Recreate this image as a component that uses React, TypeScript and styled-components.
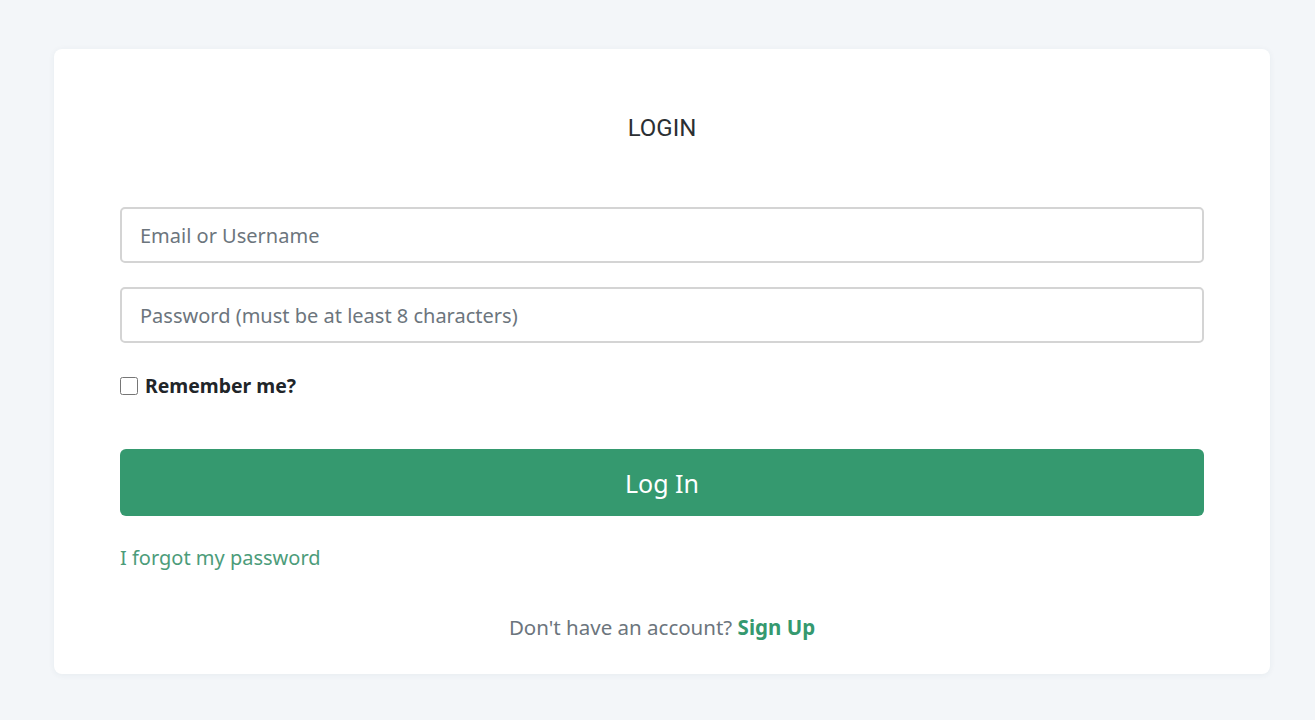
import React from "react";
import styled, { createGlobalStyle } from "styled-components";

const Global = createGlobalStyle`
  html, body { margin: 0; padding: 0; background: #f3f6f9; }
  body { font-family: "Noto Sans", "Open Sans", sans-serif; }
  * { box-sizing: border-box; }
`;

const Page = styled.div`
  min-height: 720px;
  padding: 49px 45px 47px 54px;
`;

const Card = styled.div`
  background: #ffffff;
  border-radius: 8px;
  box-shadow: 0 1px 6px rgba(40, 60, 90, 0.06);
  padding: 64px 66px 33px 66px;
  display: flex;
  flex-direction: column;
`;

const Title = styled.h1`
  margin: 0;
  text-align: center;
  font-family: Roboto, sans-serif;
  font-weight: 400;
  font-size: 24px;
  line-height: 30px;
  color: #2b2f33;
`;

const Form = styled.form`
  display: flex;
  flex-direction: column;
  margin-top: 64px;
`;

const Input = styled.input`
  height: 56px;
  width: 100%;
  border: 2px solid #d4d4d4;
  border-radius: 5px;
  padding: 0 18px;
  font-family: "Noto Sans", sans-serif;
  font-size: 20px;
  color: #495057;
  margin-bottom: 24px;
  outline: none;
  &::placeholder { color: #6c757d; }
`;

const CheckRow = styled.label`
  display: flex;
  align-items: center;
  gap: 7px;
  margin-top: 5px;
  font-weight: 700;
  font-size: 19.4px;
  color: #212529;
`;

const Check = styled.input`
  margin: 0;
  width: 18px;
  height: 18px;
`;

const Button = styled.button`
  margin-top: 50px;
  height: 67px;
  border: none;
  border-radius: 6px;
  background: #35996f;
  color: #ffffff;
  font-family: "Noto Sans", sans-serif;
  font-size: 25px;
  cursor: pointer;
`;

const Forgot = styled.a`
  margin-top: 28px;
  font-size: 20px;
  color: #4c9c7a;
  text-decoration: none;
  align-self: flex-start;
`;

const Footer = styled.p`
  margin: 42px 0 0 0;
  text-align: center;
  font-size: 20.5px;
  color: #6c757d;
`;

const SignUp = styled.a`
  color: #35996f;
  font-weight: 700;
  text-decoration: none;
`;

export default function App() {
  return (
    <>
      <Global />
      <Page>
        <Card>
          <Title>LOGIN</Title>
          <Form onSubmit={(e) => e.preventDefault()}>
            <Input type="text" placeholder="Email or Username" />
            <Input type="password" placeholder="Password (must be at least 8 characters)" />
            <CheckRow>
              <Check type="checkbox" />
              Remember me?
            </CheckRow>
            <Button type="submit">Log In</Button>
            <Forgot href="#">I forgot my password</Forgot>
          </Form>
          <Footer>
            Don't have an account? <SignUp href="#">Sign Up</SignUp>
          </Footer>
        </Card>
      </Page>
    </>
  );
}
